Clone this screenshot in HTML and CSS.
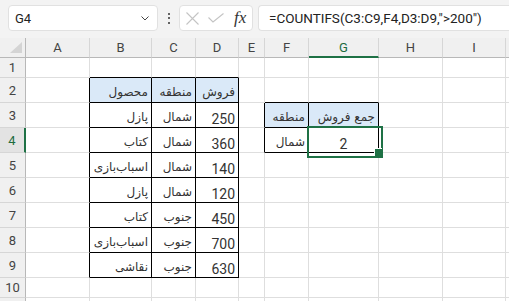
FILE: index.html
```html
<!DOCTYPE html>
<html lang="fa">
<head>
    <meta charset="UTF-8">
    <meta name="viewport" content="width=device-width, initial-scale=1.0">
    <title>COUNTIFS</title>
    <link rel="stylesheet" href="styles.css">
</head>
<body>
    <!-- Formula bar -->
    <div class="toolbar">
        <div class="namebox">
            <span>G4</span>
            <svg class="chevron" width="8" height="5" viewBox="0 0 8 5"><path d="M0.5 0.5 L4 4 L7.5 0.5" fill="none" stroke="#444" stroke-width="1"/></svg>
        </div>
        <div class="dots"><span></span><span></span><span></span></div>
        <div class="fxbox">
            <svg width="13" height="13" viewBox="0 0 13 13"><path d="M0.5 0.5 L12.5 12.5 M12.5 0.5 L0.5 12.5" stroke="#c4c4c4" stroke-width="1.1"/></svg>
            <svg width="16" height="10" viewBox="0 0 16 10"><path d="M0.5 4.5 L5 9 L15.5 0.5" fill="none" stroke="#c4c4c4" stroke-width="1.1"/></svg>
            <span class="fx">fx</span>
        </div>
        <div class="formula">=COUNTIFS(C3:C9,F4,D3:D9,"&gt;200")</div>
    </div>

    <!-- Sheet grid -->
    <div class="sheet">
        <div class="corner"><span class="tri"></span></div>
        <div class="h">A</div><div class="h">B</div><div class="h">C</div><div class="h">D</div><div class="h">E</div>
        <div class="h">F</div><div class="h sel">G</div><div class="h">H</div><div class="h">I</div><div class="h"></div>

        <div class="r">1</div>
        <div class="c"></div><div class="c bt"></div><div class="c bt"></div><div class="c bt"></div><div class="c"></div>
        <div class="c"></div><div class="c"></div><div class="c"></div><div class="c"></div><div class="c"></div>

        <div class="r">2</div>
        <div class="c bl"></div>
        <div class="c box hd fa">محصول</div><div class="c box hd fa">منطقه</div><div class="c box hd fa">فروش</div>
        <div class="c"></div><div class="c bt"></div><div class="c bt"></div><div class="c"></div><div class="c"></div><div class="c"></div>

        <div class="r">3</div>
        <div class="c bl"></div>
        <div class="c box fa">پازل</div><div class="c box fa">شمال</div><div class="c box num">250</div>
        <div class="c bl"></div><div class="c box hd fa">منطقه</div><div class="c box hd fa">جمع فروش</div>
        <div class="c"></div><div class="c"></div><div class="c"></div>

        <div class="r sel">4</div>
        <div class="c bl"></div>
        <div class="c box fa">کتاب</div><div class="c box fa">شمال</div><div class="c box num">360</div>
        <div class="c bl"></div><div class="c box fa">شمال</div><div class="c box mid active">2</div>
        <div class="c"></div><div class="c"></div><div class="c"></div>

        <div class="r">5</div>
        <div class="c bl"></div>
        <div class="c box fa">اسباب&zwnj;بازی</div><div class="c box fa">شمال</div><div class="c box num">140</div>
        <div class="c"></div><div class="c"></div><div class="c"></div><div class="c"></div><div class="c"></div><div class="c"></div>

        <div class="r">6</div>
        <div class="c bl"></div>
        <div class="c box fa">پازل</div><div class="c box fa">شمال</div><div class="c box num">120</div>
        <div class="c"></div><div class="c"></div><div class="c"></div><div class="c"></div><div class="c"></div><div class="c"></div>

        <div class="r">7</div>
        <div class="c bl"></div>
        <div class="c box fa">کتاب</div><div class="c box fa">جنوب</div><div class="c box num">450</div>
        <div class="c"></div><div class="c"></div><div class="c"></div><div class="c"></div><div class="c"></div><div class="c"></div>

        <div class="r">8</div>
        <div class="c bl"></div>
        <div class="c box fa">اسباب&zwnj;بازی</div><div class="c box fa">جنوب</div><div class="c box num">700</div>
        <div class="c"></div><div class="c"></div><div class="c"></div><div class="c"></div><div class="c"></div><div class="c"></div>

        <div class="r">9</div>
        <div class="c bl"></div>
        <div class="c box fa">نقاشی</div><div class="c box fa">جنوب</div><div class="c box num">630</div>
        <div class="c"></div><div class="c"></div><div class="c"></div><div class="c"></div><div class="c"></div><div class="c"></div>

        <div class="r">10</div>
        <div class="c"></div><div class="c"></div><div class="c"></div><div class="c"></div><div class="c"></div>
        <div class="c"></div><div class="c"></div><div class="c"></div><div class="c"></div><div class="c"></div>

        <div class="r"></div>
        <div class="c"></div><div class="c"></div><div class="c"></div><div class="c"></div><div class="c"></div>
        <div class="c"></div><div class="c"></div><div class="c"></div><div class="c"></div><div class="c"></div>
    </div>
</body>
</html>
```

FILE: styles.css
```css
/* General */
* {
    box-sizing: border-box;
}

body {
    margin: 0;
    overflow: hidden;
    font-family: Roboto, "DejaVu Sans", sans-serif;
    color: #222;
    background-color: #fff;
}

/* Formula bar */
.toolbar {
    display: flex;
    align-items: flex-start;
    height: 38px;
    padding: 5px 0 0 8px;
    background-color: #f3f3f3;
}

.namebox,
.fxbox,
.formula {
    height: 26px;
    background-color: #fff;
    border: 1px solid #e1e1e1;
    border-radius: 4px;
    display: flex;
    align-items: center;
}

.namebox {
    width: 150px;
    padding: 0 8px 0 6px;
    justify-content: space-between;
    font-size: 13px;
    color: #222;
}

.chevron {
    margin-top: 1px;
}

.dots {
    width: 21px;
    height: 26px;
    display: flex;
    flex-direction: column;
    align-items: center;
    justify-content: center;
    gap: 2.5px;
}

.dots span {
    width: 2px;
    height: 2px;
    background-color: #333;
    border-radius: 1px;
}

.fxbox {
    width: 74px;
    padding: 0 0 0 6px;
    gap: 9px;
}

.fx {
    font-family: "Liberation Serif", serif;
    font-style: italic;
    font-size: 17px;
    color: #333;
    margin-left: 1px;
    margin-top: -1px;
}

.formula {
    flex: 1;
    margin-left: 5px;
    border-right: none;
    border-radius: 4px 0 0 4px;
    padding-left: 10px;
    font-size: 13.5px;
    color: #222;
}

/* Sheet */
.sheet {
    display: grid;
    grid-template-columns: 26px 64px 62px 44px 43px 26px 44px 70px 64px 63px 1fr;
    grid-template-rows: 20px 20px repeat(8, 25px) 20px 20px;
}

.sheet > div {
    border-right: 1px solid #dedede;
    border-bottom: 1px solid #dedede;
    display: flex;
    overflow: hidden;
}

.corner {
    background-color: #f0f0f0;
    position: relative;
}

.sheet > .corner {
    border-right-color: #b8b8b8;
    border-bottom-color: #b8b8b8;
}

.tri {
    position: absolute;
    left: 10px;
    top: 4px;
    width: 0;
    height: 0;
    border-left: 12px solid transparent;
    border-bottom: 11px solid #d4d4d4;
}

.h,
.r {
    background-color: #f0f0f0;
    align-items: center;
    justify-content: center;
    font-size: 13px;
    color: #444;
}

.sheet > .h {
    border-right-color: #d6d6d6;
    border-bottom-color: #b8b8b8;
}

.sheet > .r {
    border-right-color: #b8b8b8;
    border-bottom-color: #d6d6d6;
}

.sheet > .h.sel {
    color: #1d6b3f;
    border-bottom: 2px solid #1e7145;
}

.sheet > .r.sel {
    background-color: #e3e3e3;
    color: #1d6b3f;
    border-right: 2px solid #1e7145;
}

/* Cells */
.c {
    font-size: 14px;
    line-height: 16px;
    align-items: flex-end;
    padding: 0 3px 0 3px;
    color: #333;
}

.sheet > .active {
    overflow: visible;
}

.num {
    justify-content: flex-end;
}

.mid {
    justify-content: center;
}

.fa {
    direction: rtl;
    justify-content: flex-start;
    font-family: "DejaVu Sans", sans-serif;
    font-size: 12px;
    padding-bottom: 2px;
    color: #333;
}

.hd {
    background-color: #dae9f8;
}

.sheet > .box {
    border-right-color: #000;
    border-bottom-color: #000;
}

.sheet > .bl {
    border-right-color: #000;
}

.sheet > .bt {
    border-bottom-color: #000;
}

/* Active cell */
.active {
    position: relative;
}

.active::before {
    content: "";
    position: absolute;
    left: -2px;
    top: -2px;
    width: 72px;
    height: 28px;
    border: 2px solid #1e7145;
}

.active::after {
    content: "";
    position: absolute;
    left: 65px;
    top: 20px;
    width: 7px;
    height: 7px;
    background-color: #1e7145;
    border: 1px solid #fff;
    border-right: none;
    border-bottom: none;
}
```
